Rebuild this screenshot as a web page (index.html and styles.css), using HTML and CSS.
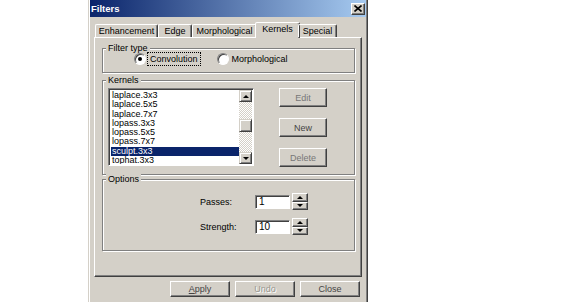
FILE: index.html
```html
<!DOCTYPE html>
<html lang="en">
<head>
    <meta charset="UTF-8">
    <title>Filters</title>
    <link rel="stylesheet" href="styles.css">
</head>
<body>
    <div class="window">
        <!-- title bar -->
        <div class="titlebar">
            <span class="title">Filters</span>
            <span class="close">
                <svg width="8" height="7" viewBox="0 0 8 7"><path d="M0.5 0.5L7.5 6.5M7.5 0.5L0.5 6.5" stroke="#000" stroke-width="1.6"/></svg>
            </span>
        </div>

        <!-- tabs -->
        <div class="tabs">
            <div class="tab t-enh">Enhancement</div>
            <div class="tab t-edge">Edge</div>
            <div class="tab t-morph">Morphological</div>
            <div class="tab t-kern active">Kernels</div>
            <div class="tab t-spec">Special</div>
        </div>

        <div class="panel">
            <fieldset class="group g-type">
                <legend>Filter type</legend>
                <div class="radios">
                    <label class="radio-row"><span class="radio checked"></span><span class="focus">Convolution</span></label>
                    <label class="radio-row"><span class="radio"></span><span>Morphological</span></label>
                </div>
            </fieldset>

            <fieldset class="group g-kern">
                <legend>Kernels</legend>
                <div class="kern-body">
                    <div class="listbox">
                        <ul class="items">
                            <li>laplace.3x3</li>
                            <li>laplace.5x5</li>
                            <li>laplace.7x7</li>
                            <li>lopass.3x3</li>
                            <li>lopass.5x5</li>
                            <li>lopass.7x7</li>
                            <li class="sel">sculpt.3x3</li>
                            <li>tophat.3x3</li>
                        </ul>
                        <div class="scrollbar">
                            <div class="sb-btn"><span class="arr up"></span></div>
                            <div class="sb-track">
                                <div class="sb-thumb"></div>
                            </div>
                            <div class="sb-btn"><span class="arr down"></span></div>
                        </div>
                    </div>
                    <div class="side-buttons">
                        <button class="btn dim">Edit</button>
                        <button class="btn">New</button>
                        <button class="btn dim">Delete</button>
                    </div>
                </div>
            </fieldset>

            <fieldset class="group g-opt">
                <legend>Options</legend>
                <div class="opt-body">
                    <div class="opt-row">
                        <span class="opt-label">Passes:</span>
                        <span class="field">1</span>
                        <span class="spin">
                            <span class="spin-btn"><span class="arr up"></span></span>
                            <span class="spin-btn"><span class="arr down"></span></span>
                        </span>
                    </div>
                    <div class="opt-row">
                        <span class="opt-label">Strength:</span>
                        <span class="field">10</span>
                        <span class="spin">
                            <span class="spin-btn"><span class="arr up"></span></span>
                            <span class="spin-btn"><span class="arr down"></span></span>
                        </span>
                    </div>
                </div>
            </fieldset>
        </div>

        <!-- dialog buttons -->
        <div class="footer">
            <button class="btn wide"><u>A</u>pply</button>
            <button class="btn wide disabled">Undo</button>
            <button class="btn wide">Close</button>
        </div>
    </div>
</body>
</html>
```

FILE: styles.css
```css
body {
    margin: 0;
    background: #fff;
    font-family: "Liberation Sans", Arial, sans-serif;
    font-size: 9px;
    color: #000;
}
.window {
    margin-left: 88px;
    width: 280px;
    height: 302px;
    box-sizing: border-box;
    background: #d4d0c8;
    border-left: 1px solid #d4d0c8;
    border-right: 1px solid #404040;
    box-shadow: inset 1px 0 #fff, inset -1px 0 #808080;
    padding: 0 1px 0 1px;
}
.titlebar {
    height: 17px;
    display: flex;
    align-items: center;
    justify-content: space-between;
    background: linear-gradient(to right, #0a246a, #a6caf0);
    padding: 0 1px 0 1px;
}
.title {
    color: #fff;
    font-weight: bold;
    font-size: 9.5px;
}
.close {
    width: 14px;
    height: 12px;
    box-sizing: border-box;
    background: #d4d0c8;
    border: 1px solid;
    border-color: #fff #404040 #404040 #fff;
    box-shadow: inset -1px -1px #808080;
    display: flex;
    align-items: center;
    justify-content: center;
}
.tabs {
    display: flex;
    align-items: flex-end;
    height: 15px;
    margin: 5px 0 0 5px;
    position: relative;
    z-index: 1;
}
.tab {
    height: 13px;
    box-sizing: border-box;
    border: 1px solid;
    border-bottom: none;
    border-color: #fff #404040 transparent #fff;
    border-radius: 2px 2px 0 0;
    box-shadow: inset -1px 0 #808080;
    text-align: center;
    line-height: 12px;
}
.t-enh { width: 63px; }
.t-edge { width: 34px; }
.t-morph { width: 65px; }
.t-kern { width: 41px; }
.t-spec { width: 39px; }
.tab.active {
    height: 16px;
    margin: 0 -2px -1px -2px;
    width: 45px;
    background: #d4d0c8;
    line-height: 13px;
}
.panel {
    width: 268px;
    height: 240px;
    margin-left: 4px;
    box-sizing: border-box;
    border: 1px solid;
    border-color: #fff #404040 #404040 #fff;
    box-shadow: inset -1px -1px #808080;
    padding: 5px 6px 0 7px;
    display: flex;
    flex-direction: column;
}
.group {
    margin: 0;
    padding: 0 5px;
    border: 1px solid #808080;
    box-shadow: inset 1px 1px #fff, 1px 1px #fff;
    min-width: 0;
}
.group legend {
    padding: 0 2px;
    margin-left: -2px;
    line-height: 11px;
    background: #d4d0c8;
}
.g-type {
    height: 30px;
    box-sizing: border-box;
}
.radios {
    display: flex;
    gap: 18px;
    padding-left: 26px;
    margin-top: -1px;
}
.radio-row {
    display: flex;
    align-items: center;
    gap: 3px;
    height: 12px;
}
.radio {
    width: 10px;
    height: 10px;
    border-radius: 50%;
    background: #fff;
    border: 1px solid;
    border-color: #808080 #fff #fff #808080;
    box-shadow: inset 1px 1px #404040;
    position: relative;
}
.radio.checked::after {
    content: "";
    position: absolute;
    left: 3px;
    top: 3px;
    width: 4px;
    height: 4px;
    border-radius: 50%;
    background: #000;
}
.focus {
    outline: 1px dotted #000;
    outline-offset: 1px;
    padding: 0 1px;
}
.g-kern {
    margin-top: 2px;
    height: 100px;
    box-sizing: border-box;
}
.kern-body {
    display: flex;
    gap: 25px;
    padding-top: 2px;
}
.listbox {
    width: 146px;
    height: 78px;
    box-sizing: border-box;
    border: 1px solid;
    border-color: #808080 #fff #fff #808080;
    box-shadow: inset 1px 1px #404040;
    background: #fff;
    display: flex;
    padding: 2px 1px 1px 2px;
}
.items {
    list-style: none;
    margin: 0;
    padding: 0;
    flex: 1;
    overflow: hidden;
}
.items li {
    height: 9.3px;
    line-height: 9.3px;
    padding-left: 1px;
    white-space: nowrap;
}
.items li.sel {
    background: #0a246a;
    color: #fff;
}
.scrollbar {
    width: 13px;
    display: flex;
    flex-direction: column;
    margin-top: -1px;
}
.sb-btn {
    height: 12px;
    box-sizing: border-box;
    background: #d4d0c8;
    border: 1px solid;
    border-color: #d4d0c8 #404040 #404040 #d4d0c8;
    box-shadow: inset 1px 1px #fff, inset -1px -1px #808080;
    display: flex;
    align-items: center;
    justify-content: center;
}
.sb-track {
    flex: 1;
    background: repeating-conic-gradient(#fff 0 25%, #d4d0c8 0 50%) 0 0 / 2px 2px;
    padding-top: 17px;
}
.sb-thumb {
    height: 13px;
    box-sizing: border-box;
    background: #d4d0c8;
    border: 1px solid;
    border-color: #d4d0c8 #404040 #404040 #d4d0c8;
    box-shadow: inset 1px 1px #fff, inset -1px -1px #808080;
}
.arr {
    width: 0;
    height: 0;
    border-left: 3px solid transparent;
    border-right: 3px solid transparent;
}
.arr.up { border-bottom: 3px solid #000; }
.arr.down { border-top: 3px solid #000; }
.side-buttons {
    display: flex;
    flex-direction: column;
    gap: 11px;
}
.btn {
    font: inherit;
    width: 48px;
    height: 19px;
    padding: 0;
    background: #d4d0c8;
    color: #444;
    border: 1px solid;
    border-color: #fff #404040 #404040 #fff;
    box-shadow: inset -1px -1px #808080;
    border-radius: 0;
}
.btn.dim { color: #777; }
.g-opt {
    margin-top: -1px;
    height: 77px;
    box-sizing: border-box;
}
.opt-body {
    padding-left: 92px;
}
.opt-row {
    display: flex;
    align-items: center;
    height: 17px;
    margin-top: 8px;
}
.opt-row + .opt-row { margin-top: 8px; }
.opt-label {
    width: 55px;
}
.field {
    width: 35px;
    height: 14px;
    box-sizing: border-box;
    background: #fff;
    border: 1px solid;
    border-color: #808080 #fff #fff #808080;
    box-shadow: inset 1px 1px #404040;
    padding-left: 3px;
    line-height: 12px;
    font-size: 10px;
}
.spin {
    display: flex;
    flex-direction: column;
    margin-left: 2px;
}
.spin-btn {
    width: 16px;
    height: 8.5px;
    box-sizing: border-box;
    background: #d4d0c8;
    border: 1px solid;
    border-color: #fff #404040 #404040 #fff;
    box-shadow: inset -1px -1px #808080;
    display: flex;
    align-items: center;
    justify-content: center;
}
.footer {
    display: flex;
    justify-content: flex-end;
    gap: 5px;
    padding: 4px 6px 0 0;
}
.btn.wide {
    width: 60px;
    height: 16px;
}
.btn.disabled {
    color: #9a9890;
    text-shadow: 1px 1px #fff;
}
```
